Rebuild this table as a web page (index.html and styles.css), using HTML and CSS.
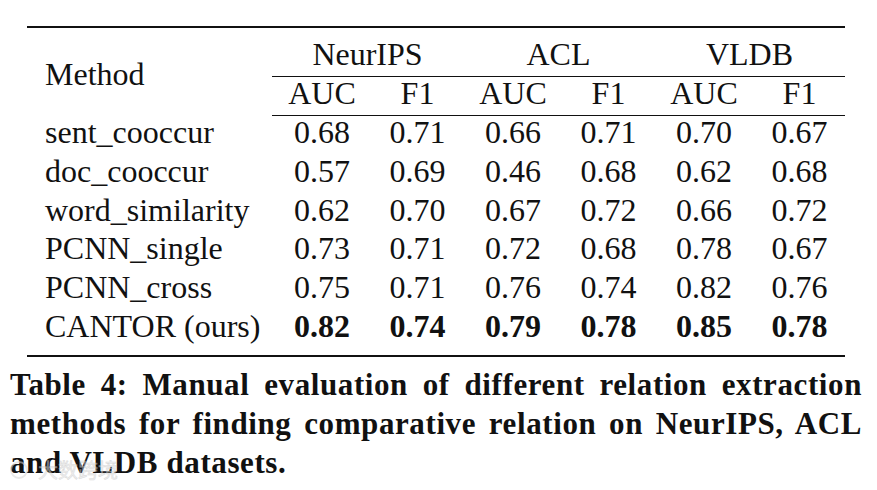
FILE: index.html
```html
<!DOCTYPE html>
<html lang="en">
<head>
<meta charset="utf-8">
<title>Table 4</title>
<link rel="stylesheet" href="styles.css">
</head>
<body>
<div class="page">
  <table class="results">
    <colgroup>
      <col class="c-method">
      <col class="c-auc"><col class="c-f1">
      <col class="c-auc"><col class="c-f1">
      <col class="c-auc"><col class="c-f1">
    </colgroup>
    <thead>
      <tr class="h1">
        <th rowspan="2" class="method-h">Method</th>
        <th colspan="2" class="grp">NeurIPS</th>
        <th colspan="2" class="grp">ACL</th>
        <th colspan="2" class="grp">VLDB</th>
      </tr>
      <tr class="h2">
        <th>AUC</th><th>F1</th>
        <th>AUC</th><th>F1</th>
        <th>AUC</th><th>F1</th>
      </tr>
    </thead>
    <tbody>
      <tr class="first"><td class="m">sent_cooccur</td><td>0.68</td><td>0.71</td><td>0.66</td><td>0.71</td><td>0.70</td><td>0.67</td></tr>
      <tr><td class="m">doc_cooccur</td><td>0.57</td><td>0.69</td><td>0.46</td><td>0.68</td><td>0.62</td><td>0.68</td></tr>
      <tr><td class="m">word_similarity</td><td>0.62</td><td>0.70</td><td>0.67</td><td>0.72</td><td>0.66</td><td>0.72</td></tr>
      <tr><td class="m">PCNN_single</td><td>0.73</td><td>0.71</td><td>0.72</td><td>0.68</td><td>0.78</td><td>0.67</td></tr>
      <tr><td class="m">PCNN_cross</td><td>0.75</td><td>0.71</td><td>0.76</td><td>0.74</td><td>0.82</td><td>0.76</td></tr>
      <tr class="last"><td class="m">CANTOR (ours)</td><td class="b">0.82</td><td class="b">0.74</td><td class="b">0.79</td><td class="b">0.78</td><td class="b">0.85</td><td class="b">0.78</td></tr>
    </tbody>
  </table>
  <div class="caption">
    <span class="line just">Table 4: Manual evaluation of different relation extraction</span>
    <span class="line just">methods for finding comparative relation on NeurIPS, ACL</span>
    <span class="line">and VLDB datasets.</span>
  </div>
  <div class="watermark"><span class="wm-logo"></span><span class="wm-text">大数跨境</span></div>
</div>
</body>
</html>
```
FILE: styles.css
```css
html {
  margin: 0;
  padding: 0;
  background: #ffffff;
}
body {
  margin: 0;
  padding: 0;
  overflow: hidden;
  font-family: "Liberation Serif", "Times New Roman", serif;
}
.page {
  position: relative;
  width: 877px;
  height: 490px;
  overflow: hidden;
  color: #111111;
}
.results {
  border-collapse: collapse;
  table-layout: fixed;
  width: 818px;
  margin: 26px 0 0 27px;
  font-size: 32px;
  line-height: 32px;
  border-top: 2px solid #111;
  border-bottom: 2px solid #111;
}
.c-method { width: 245px; }
.c-auc { width: 100px; }
.c-f1 { width: 91px; }
.results th, .results td {
  padding: 0;
  font-weight: normal;
  text-align: center;
  white-space: nowrap;
}
.results .method-h, .results .m {
  text-align: left;
  padding-left: 18px;
}
.h1 th {
  padding-top: 10px;
  padding-bottom: 6px;
}
.h1 .grp {
  border-bottom: 1px solid #111;
}
.h1 .method-h {
  vertical-align: middle;
  padding-top: 4px;
  padding-bottom: 0;
}
.h2 th {
  padding-top: 0;
  padding-bottom: 6px;
  border-bottom: 1px solid #111;
}
.results tbody td {
  padding-top: 0;
  padding-bottom: 6.8px;
}
.results tbody tr.last td {
  padding-bottom: 13px;
}
.results td.b {
  font-weight: bold;
}
.caption {
  margin: 8px 0 0 10px;
  width: 852px;
  font-size: 31px;
  letter-spacing: 0.6px;
  line-height: 39px;
  font-weight: bold;
}
.line {
  display: block;
  white-space: nowrap;
}
.line.just {
  white-space: normal;
  text-align: justify;
  text-align-last: justify;
}
.watermark {
  position: absolute;
  left: 10px;
  top: 458px;
  display: flex;
  align-items: center;
  gap: 10px;
  opacity: 0.55;
}
.wm-logo {
  width: 14px;
  height: 14px;
  border: 2px solid #d8d8d8;
  border-radius: 50%;
}
.wm-text {
  font-family: "Noto Sans CJK SC", sans-serif;
  font-size: 20px;
  line-height: 24px;
  color: #e0e0e0;
  -webkit-text-stroke: 0.5px #bdbdbd;
}
```
